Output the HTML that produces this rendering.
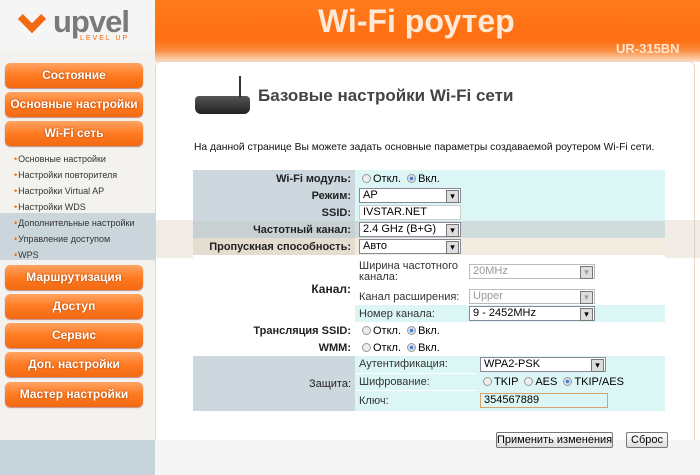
<!DOCTYPE html>
<html><head><meta charset="utf-8"><style>
*{margin:0;padding:0;box-sizing:border-box}
body{width:700px;height:475px;overflow:hidden;background:#fff;font-family:"Liberation Sans",sans-serif;position:relative}
.abs{position:absolute}
.hdr{left:155px;top:0;width:545px;height:62px;background:linear-gradient(#ff7a1a 0,#ff6f12 40px,#fa8a3c 50px,#fde0c8 62px)}
.btn{position:absolute;left:5px;width:138px;height:25px;border-radius:5px;background:linear-gradient(#ffa463,#ff7a22 50%,#f26a12);color:#fff;font-weight:bold;font-size:12px;text-align:center;line-height:25px;text-shadow:0 0 2px #a04000;box-shadow:0 1px 1px #b88;white-space:nowrap}
.sub{position:absolute;left:14px;font-size:9px;color:#333}
.sub:before{content:"•";color:#f60;margin-right:1px}
table{border-collapse:collapse;font-size:11px}
td{padding:0 4px;height:17px;white-space:nowrap}
.l{text-align:right;font-weight:bold;background:#ccd7de;width:162px;color:#222}
.v{background:#dcf6f6}
.sel{display:inline-block;border:1px solid #889;background:#fff;height:15px;line-height:13px;padding-left:3px;position:relative;font-size:11px;vertical-align:middle}
.sel:after{content:"▾";position:absolute;right:1px;top:1px;width:11px;height:11px;background:#ddd;border:1px solid #777;font-size:9px;line-height:10px;text-align:center}
.sel.na:after{display:none}
.dis{color:#999;border-color:#bbb}
.r{display:inline-block;width:9px;height:9px;border-radius:50%;border:1px solid #999;background:#eee;vertical-align:-1px;margin:0 2px 0 3px}
.r.on{background:radial-gradient(#3a7fd0 30%,#dde 40%)}
.inner td{height:17px;font-weight:normal}
</style></head><body>
<div class="abs" style="left:0;top:0;width:155px;height:475px;background:#f4f2ef"></div>
<div class="abs" style="left:0;top:0;width:155px;height:50px;background:#f5f5f5"></div>
<div class="abs" style="left:0;top:213px;width:155px;height:47px;background:#cad6dc"></div>
<div class="abs" style="left:0;top:440px;width:155px;height:35px;background:#c7d3da"></div>
<div class="abs" style="left:22px;top:9px;width:20px;height:20px;border:7px solid #f26a12;border-top:none;border-left:none;transform:rotate(45deg)"></div>
<div class="abs" style="left:53px;top:4px;font-size:31px;color:#7a7a7a;letter-spacing:-1px;font-weight:bold">upvel</div>
<div class="abs" style="left:80px;top:35px;font-size:7px;color:#f60;letter-spacing:2px">LEVEL UP</div>
<div class="abs hdr"></div>
<div class="abs" style="left:318px;top:3px;font-size:32px;font-weight:bold;color:#fde9d6">Wi-Fi роутер</div>
<div class="abs" style="left:616px;top:41px;font-size:13px;font-weight:bold;color:#fde5d0">UR-315BN</div>
<div class="abs" style="left:155px;top:61px;width:540px;height:414px;background:#fff;border:1px solid #e8d6c8;border-radius:6px"></div>
<div class="abs" style="left:155px;top:220px;width:545px;height:38px;background:rgba(215,200,180,.35)"></div>
<div class="abs" style="left:155px;top:440px;width:545px;height:35px;background:#f5f5f5"></div>
<div class="btn" style="top:63px">Состояние</div>
<div class="btn" style="top:92px">Основные настройки</div>
<div class="btn" style="top:121px">Wi-Fi сеть</div>
<div class="sub" style="top:154px">Основные настройки</div>
<div class="sub" style="top:170px">Настройки повторителя</div>
<div class="sub" style="top:186px">Настройки Virtual AP</div>
<div class="sub" style="top:202px">Настройки WDS</div>
<div class="sub" style="top:218px">Дополнительные настройки</div>
<div class="sub" style="top:234px">Управление доступом</div>
<div class="sub" style="top:250px">WPS</div>
<div class="btn" style="top:265px">Маршрутизация</div>
<div class="btn" style="top:294px">Доступ</div>
<div class="btn" style="top:323px">Сервис</div>
<div class="btn" style="top:352px">Доп. настройки</div>
<div class="btn" style="top:382px">Мастер настройки</div>
<div class="abs" style="left:195px;top:96px;width:55px;height:18px;background:linear-gradient(#555,#222);border-radius:4px 4px 6px 6px"></div>
<div class="abs" style="left:239px;top:76px;width:2px;height:22px;background:#333"></div>
<div class="abs" style="left:258px;top:86px;font-size:17px;font-weight:bold;color:#444">Базовые настройки Wi-Fi сети</div>
<div class="abs" style="left:194px;top:142px;font-size:10.3px;color:#111;white-space:nowrap">На данной странице Вы можете задать основные параметры создаваемой роутером Wi-Fi сети.</div>
<table class="abs" style="left:193px;top:170px;width:472px">
<tr><td class="l">Wi-Fi модуль:</td><td class="v"><span class="r"></span>Откл. <span class="r on"></span>Вкл.</td></tr>
<tr><td class="l">Режим:</td><td class="v"><span class="sel" style="width:102px">AP</span></td></tr>
<tr><td class="l">SSID:</td><td class="v"><span class="sel na" style="width:102px;border-color:#ccc">IVSTAR.NET</span></td></tr>
<tr><td class="l" style="background:#c8d0d2">Частотный канал:</td><td class="v" style="background:#d0dcdc"><span class="sel" style="width:102px">2.4 GHz (B+G)</span></td></tr>
<tr><td class="l" style="background:#e4dccf">Пропускная способность:</td><td class="v" style="background:#f2ebe0"><span class="sel" style="width:102px">Авто</span></td></tr>
<tr><td class="l" style="background:#fff;font-size:12px">Канал:</td><td style="padding:0;background:#fff"><table class="inner" style="width:100%">
<tr><td style="height:33px;width:110px;line-height:11px;color:#333;white-space:normal">Ширина частотного канала:</td><td><span class="sel dis" style="width:126px">20MHz</span></td></tr>
<tr><td style="color:#333">Канал расширения:</td><td><span class="sel dis" style="width:126px">Upper</span></td></tr>
<tr><td class="v" style="color:#333">Номер канала:</td><td class="v"><span class="sel" style="width:126px">9 - 2452MHz</span></td></tr></table></td></tr>
<tr><td class="l" style="background:#fff">Трансляция SSID:</td><td><span class="r"></span>Откл. <span class="r on"></span>Вкл.</td></tr>
<tr><td class="l" style="background:#fff">WMM:</td><td><span class="r"></span>Откл. <span class="r on"></span>Вкл.</td></tr>
<tr><td class="l" style="font-weight:normal">Защита:</td><td style="padding:0"><table class="inner" style="width:100%">
<tr><td class="v" style="width:121px;color:#333;border-bottom:1px solid #fff">Аутентификация:</td><td class="v"><span class="sel" style="width:126px">WPA2-PSK</span></td></tr>
<tr><td class="v" style="color:#333;border-bottom:1px solid #fff">Шифрование:</td><td class="v"><span class="r"></span>TKIP <span class="r"></span>AES <span class="r on"></span>TKIP/AES</td></tr>
<tr><td class="v" style="color:#333;height:21px">Ключ:</td><td class="v"><span class="sel na" style="width:128px;border-color:#d9a070;background:#dcf6f6">354567889</span></td></tr></table></td></tr>
</table>
<div class="abs" style="left:496px;top:432px;width:117px;height:16px;border:1px solid #777;border-radius:2px;background:linear-gradient(#fff,#ddd);font-size:11px;text-align:center;line-height:14px;white-space:nowrap">Применить изменения</div>
<div class="abs" style="left:626px;top:432px;width:42px;height:16px;border:1px solid #777;border-radius:2px;background:linear-gradient(#fff,#ddd);font-size:11px;text-align:center;line-height:14px">Сброс</div>
</body></html>
